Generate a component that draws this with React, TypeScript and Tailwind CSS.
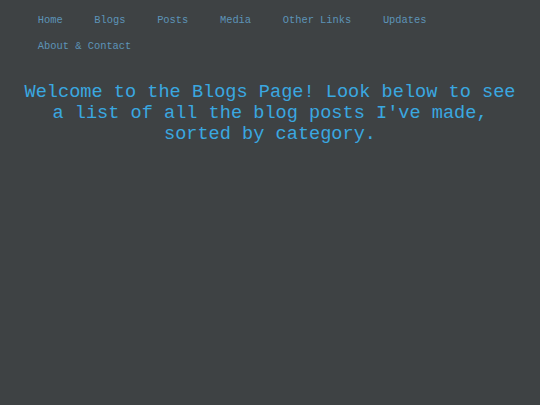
export default function App() {
  const links = ['Home', 'Blogs', 'Posts', 'Media', 'Other Links', 'Updates', 'About & Contact']

  return (
    <div className="min-h-[405px] w-full bg-[#3e4244] font-['Courier_New','Liberation_Mono',monospace]">
      {/* Nav */}
      <nav className="flex flex-wrap pl-[22px] pr-[60px] pt-[7px]">
        {links.map((link) => (
          <a key={link} href="#" className="px-[15.8px] text-[10.4px] leading-[26px] text-[#5d94b8] whitespace-pre">
            {link}
          </a>
        ))}
      </nav>

      <h1 className="mt-[23px] px-4 text-center text-[18.6px] leading-[21px] text-[#3aa8e0]">
        Welcome to the Blogs Page! Look below to see
        <br />
        a list of all the blog posts I've made,
        <br />
        sorted by category.
      </h1>
    </div>
  )
}
